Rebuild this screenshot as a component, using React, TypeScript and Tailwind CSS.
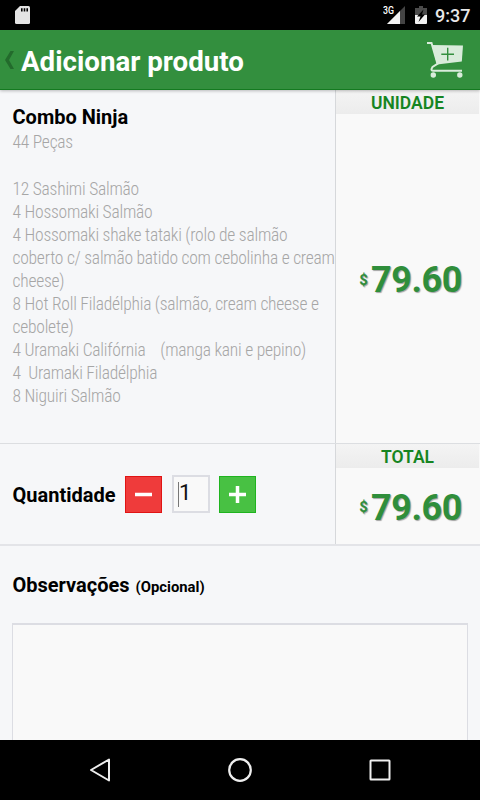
import type { ReactNode } from "react";

const description = [
  "44 Peças",
  "",
  "12 Sashimi Salmão",
  "4 Hossomaki Salmão",
  "4 Hossomaki shake tataki (rolo de salmão",
  "coberto c/ salmão batido com cebolinha e cream",
  "cheese)",
  "8 Hot Roll Filadélphia (salmão, cream cheese e",
  "cebolete)",
  "4 Uramaki Califórnia    (manga kani e pepino)",
  "4  Uramaki Filadélphia",
  "8 Niguiri Salmão",
];

function StatusBar() {
  return (
    <div className="flex h-[30px] shrink-0 items-center bg-black pr-2.5 pl-[15px]">
      <svg width="15" height="18" viewBox="0 0 15 18" className="mr-auto">
        <path d="M5 0H13.5Q15 0 15 1.5V16.5Q15 18 13.5 18H1.5Q0 18 0 16.5V5Z" fill="#e4e4e4" />
        <path d="M6 2.2h1.6v3.3H6zM8.7 2.2h1.6v3.3H8.7zM11.4 2.2H13v3.3h-1.6z" fill="#000" />
      </svg>
      <div className="relative h-[18px]">
        <svg width="18" height="18" viewBox="0 0 18 18">
          <path d="M18 0V18H0Z" fill="#444" />
          <path d="M13 5V18H0Z" fill="#f2f2f2" />
        </svg>
        <span className="absolute top-0 -left-[4px] origin-left scale-x-[0.88] bg-black text-[10px] leading-[9px] font-medium text-white">
          3G
        </span>
      </div>
      <svg width="12" height="18" viewBox="0 0 12 18" className="ml-2.5">
        <path d="M4 0H8V2H12V9H0V2H4Z" fill="#4b4b4b" />
        <path d="M0 9H12V17Q12 18 11 18H1Q0 18 0 17Z" fill="#f2f2f2" />
        <path d="M8.5 3.5L2 10.5H5.5L3.5 16L10 8.5H7Z" fill="#000" />
      </svg>
      <span className="mt-0.5 ml-[8px] w-[35px] text-[18px] leading-none font-medium whitespace-nowrap text-[#e8e8e8]">
        9:37
      </span>
    </div>
  );
}

function Header() {
  return (
    <header className="z-10 flex h-[60px] shrink-0 items-center border-b border-[#147a20] bg-[#338f3e] pr-[17px] pl-[5px] shadow-[0_1px_3px_rgba(0,0,0,0.25)]">
      <svg width="9" height="18" viewBox="0 0 9 18">
        <path d="M5.5 0H9L4 9L9 18H5.5L0 9Z" fill="#236b2c" />
      </svg>
      <h1 className="mt-1 ml-[7px] flex-1 text-[27.7px] leading-8 font-bold whitespace-nowrap text-white">
        Adicionar produto
      </h1>
      <svg width="36" height="36" viewBox="0 0 36 36" fill="none">
        <path d="M5 3L36 3.5L34.8 19.5L10 22.5Z" fill="#d9ecdb" />
        <path
          d="M0 1H4.5L10.5 21.8L5.5 25Q3.2 28.8 6 28.8H35"
          stroke="#d9ecdb"
          strokeWidth="2"
        />
        <path d="M14.3 12.2H27M20.7 5.8V18.5" stroke="#338f3e" strokeWidth="1.4" />
        <circle cx="6.3" cy="33" r="2.7" fill="#d9ecdb" />
        <circle cx="32.8" cy="33" r="2.7" fill="#d9ecdb" />
      </svg>
    </header>
  );
}

function PriceCell({ label, price }: { label: string; price: string }) {
  return (
    <div className="flex flex-col border-l border-[#d6d8db] bg-[#f9f9f9]">
      <div className="mr-px flex h-6 items-center justify-center bg-linear-to-b from-[#f4f4f4] to-[#ececec] pt-1 text-[17.5px] leading-none font-semibold text-[#168522]">
        {label}
      </div>
      <div className="flex flex-1 items-center justify-end pt-[3px] pr-[18px] font-bold text-[#2f8e3b] [text-shadow:1px_1px_1px_rgba(0,0,0,0.35)]">
        <span className="mr-[3px] text-[15px]">$</span>
        <span className="text-[36px] leading-none tracking-[-0.4px]">{price}</span>
      </div>
    </div>
  );
}

function StepButton({ className, children }: { className: string; children: ReactNode }) {
  return (
    <button className={`mt-px flex size-[37px] items-center justify-center border ${className}`}>
      <svg width="17" height="17" viewBox="0 0 17 17" stroke="#fff" strokeWidth="3.5">
        {children}
      </svg>
    </button>
  );
}

function NavBar() {
  return (
    <nav className="flex h-[60px] shrink-0 items-center justify-between bg-black px-[89px]">
      <svg width="22" height="26" viewBox="0 0 22 26" fill="none" stroke="#eee" strokeWidth="2">
        <path d="M20 2.5V23.5L2 13Z" strokeLinejoin="round" />
      </svg>
      <svg width="26" height="26" viewBox="0 0 26 26" fill="none" stroke="#eee" strokeWidth="2.2">
        <circle cx="13" cy="13" r="10.8" />
      </svg>
      <svg width="22" height="22" viewBox="0 0 22 22" fill="none" stroke="#eee" strokeWidth="2">
        <rect x="1.5" y="1.5" width="19" height="19" rx="0.5" />
      </svg>
    </nav>
  );
}

export default function App() {
  return (
    <div className="flex h-[800px] w-[480px] flex-col overflow-hidden bg-[#f6f7f9] font-['Roboto',sans-serif]">
      <StatusBar />
      <Header />

      <section className="grid h-[354px] shrink-0 grid-cols-[335px_1fr] border-b border-[#dcdee1]">
        <div className="pt-[14px] pl-[12.5px]">
          <h2 className="text-[20px] leading-[26px] font-bold text-black">Combo Ninja</h2>
          <div className="pt-[1.4px] text-[17.5px] leading-[23.1px] font-light tracking-[-0.23px] [font-stretch:75%] text-[#a6a6a6]">
            {description.map((line, i) => (
              <p key={i} className="h-[23.1px] whitespace-pre">
                {line}
              </p>
            ))}
          </div>
        </div>
        <PriceCell label="UNIDADE" price="79.60" />
      </section>

      <section className="grid h-[102px] shrink-0 grid-cols-[335px_1fr] border-b-2 border-[#e3e4e8]">
        <div className="flex items-center pl-[12.5px]">
          <span className="w-[112.5px] pt-px text-[20px] font-bold text-black">Quantidade</span>
          <StepButton className="border-[#e01414] bg-[#ef3b3b]">
            <path d="M0 8.5H17" />
          </StepButton>
          <div className="mr-[9px] ml-[10px] flex h-[38px] w-[38px] items-center border-2 border-[#dcdde3] bg-[#f9f9f9] pl-[4px]">
            <span className="h-[25px] w-px bg-[#777]" />
            <span className="-mt-0.5 text-[22px] leading-none text-[#111]">1</span>
          </div>
          <StepButton className="border-[#1fb41f] bg-[#48c143]">
            <path d="M0 8.5H17M8.5 0V17" />
          </StepButton>
        </div>
        <PriceCell label="TOTAL" price="79.60" />
      </section>

      <section className="flex flex-1 flex-col overflow-hidden px-3 pt-[26px]">
        <label className="flex items-baseline pl-[0.5px] text-[20px] leading-[26px] font-bold text-black">
          Observações <span className="ml-[6px] text-[14.8px]">(Opcional)</span>
        </label>
        <div className="mt-[23px] flex-1 border-x border-t-2 border-[#dcdde3] bg-[#f9f9f9]" />
      </section>

      <NavBar />
    </div>
  );
}
